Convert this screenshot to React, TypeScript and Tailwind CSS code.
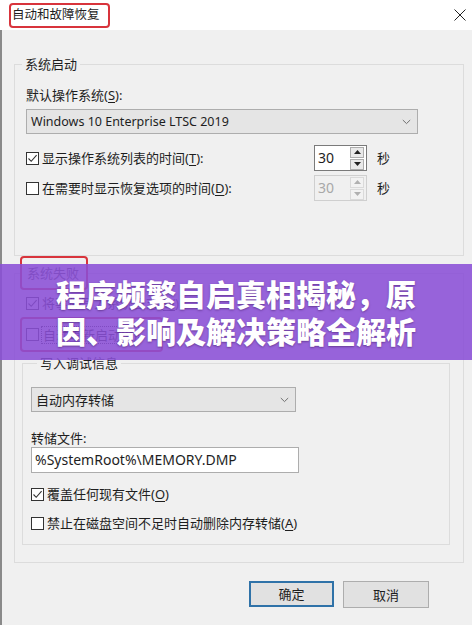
import type { ReactNode } from 'react'

const font = { fontFamily: '"Noto Sans", "Noto Sans CJK SC", sans-serif' }

function Check({ checked = false }: { checked?: boolean }) {
  return (
    <span className="flex h-[13px] w-[13px] shrink-0 items-center justify-center border border-[#333] bg-white">
      {checked && (
        <svg width="11" height="11" viewBox="0 0 11 11">
          <path d="M1.5 5.5 L4.2 8.3 L9.6 2.2" fill="none" stroke="#333" strokeWidth="1.1" />
        </svg>
      )}
    </span>
  )
}

function Chevron() {
  return (
    <svg width="9" height="6" viewBox="0 0 9 6">
      <path d="M0.8 1 L4.5 4.6 L8.2 1" fill="none" stroke="#707070" strokeWidth="1" />
    </svg>
  )
}

function Select({ value, w }: { value: string; w: string }) {
  return (
    <div className={`flex h-[25px] items-center justify-between border border-[#adadad] bg-[#e5e5e5] pl-[4px] pr-[6px] ${w}`}>
      <span>{value}</span>
      <Chevron />
    </div>
  )
}

function Spin({ disabled = false }: { disabled?: boolean }) {
  const arrow = disabled ? '#b0b0b0' : '#222'
  return (
    <div
      className={`flex h-[26px] w-[53px] items-center justify-between border pl-[3px] pr-[2px] ${
        disabled ? 'border-[#cfcfcf] bg-[#f0f0f0] text-[#a8a8a8]' : 'border-[#7a7a7a] bg-white'
      }`}
    >
      <span className="text-[14px]">30</span>
      <div className="flex flex-col gap-[1px]">
        {[0, 1].map((i) => (
          <span
            key={i}
            className={`flex h-[11px] w-[14px] items-center justify-center border ${
              disabled ? 'border-[#dadada] bg-[#f2f2f2]' : 'border-[#adadad] bg-[#e9e9e9]'
            }`}
          >
            <svg width="7" height="4" viewBox="0 0 7 4">
              <path d={i === 0 ? 'M0 4 L3.5 0 L7 4 Z' : 'M0 0 L3.5 4 L7 0 Z'} fill={arrow} />
            </svg>
          </span>
        ))}
      </div>
    </div>
  )
}

function CheckRow({ checked, children, className = '' }: { checked?: boolean; children: ReactNode; className?: string }) {
  return (
    <div className={`flex h-[18px] items-center gap-[3px] ${className}`}>
      <Check checked={checked} />
      <span>{children}</span>
    </div>
  )
}

function Key({ k }: { k: string }) {
  return (
    <>
      (<span className="underline underline-offset-2">{k}</span>)
    </>
  )
}

export default function App() {
  return (
    <div className="relative h-[625px] w-[472px] overflow-hidden bg-[#f0f0f0] text-[13px] leading-[18px] text-[#1e1e1e]" style={font}>
      <div className="flex h-[30px] items-center justify-between bg-white">
        <div className="ml-[9px] flex h-[25px] w-[101px] items-center rounded-[4px] border-2 border-[#d8343c] pl-[1px] text-[12.5px]">
          自动和故障恢复
        </div>
        <svg className="mr-[6px]" width="12" height="12" viewBox="0 0 12 12">
          <path d="M0.5 0.5 L11.5 11.5 M11.5 0.5 L0.5 11.5" stroke="#222" strokeWidth="1" />
        </svg>
      </div>

      <div className="h-[595px] border-l-2 border-[#8a8a8a] pt-[25px]">
        <fieldset className="ml-[12px] w-[450px] border border-[#dcdcdc] pb-[54px] pl-[11px]">
          <legend className="ml-[-4px] px-[3px]">系统启动</legend>
          <div className="mt-[13px]">
            默认操作系统<Key k="S" />:
          </div>
          <div className="mt-[5px]">
            <Select value="Windows 10 Enterprise LTSC 2019" w="w-[392px] text-[12.5px]" />
          </div>
          <div className="mt-[11px] flex items-center">
            <CheckRow checked className="w-[288px]">
              显示操作系统列表的时间<Key k="T" />:
            </CheckRow>
            <Spin />
            <span className="ml-[10px]">秒</span>
          </div>
          <div className="mt-[4px] flex items-center">
            <CheckRow className="w-[288px]">
              在需要时显示恢复选项的时间<Key k="D" />:
            </CheckRow>
            <Spin disabled />
            <span className="ml-[10px]">秒</span>
          </div>
        </fieldset>

        <fieldset className="ml-[12px] w-[450px] border border-[#dcdcdc] pb-[17px] pl-[5px] pr-[13px]">
          <legend className="flex h-[34px] w-[68px] items-center rounded-[4px] border-2 border-[#d8343c] pl-[5px] text-[#444]">
            系统失败
          </legend>
          <CheckRow checked className="ml-[6px] mt-[4px]">
            将事件写入系统日志<Key k="W" />
          </CheckRow>
          <div className="mt-[5px] flex h-[35px] w-[143px] items-center rounded-[4px] border-2 border-[#d8343c] pl-[4px]">
            <div className="flex items-center gap-[2px]">
              <Check />
              <span className="border border-dotted border-[#333] px-[1px] leading-[16px]">
                自动重新启动<Key k="R" />
              </span>
            </div>
          </div>
          <fieldset className="ml-[2px] mt-[2px] border border-[#dcdcdc] pb-[12px] pl-[8px]">
            <legend className="ml-[6px] px-[3px]">写入调试信息</legend>
            <div className="mt-[15px]">
              <Select value="自动内存转储" w="w-[265px]" />
            </div>
            <div className="mt-[17px]">转储文件:</div>
            <div className="flex h-[26px] w-[268px] items-center border border-[#adadad] bg-white pl-[3px] text-[14px]">
              %SystemRoot%\MEMORY.DMP
            </div>
            <CheckRow checked className="mt-[12px]">
              覆盖任何现有文件<Key k="O" />
            </CheckRow>
            <CheckRow className="mt-[11px]">
              禁止在磁盘空间不足时自动删除内存转储<Key k="A" />
            </CheckRow>
          </fieldset>
        </fieldset>

        <div className="mt-[18px] flex justify-end gap-[9px] pr-[43px]">
          <button className="h-[26px] w-[85px] border-2 border-[#2f72a8] bg-[#e1e1e1]">确定</button>
          <button className="h-[27px] w-[86px] border border-[#adadad] bg-[#e1e1e1]">取消</button>
        </div>
      </div>

      <div className="absolute left-0 top-[264px] flex h-[96px] w-full items-center justify-center bg-[#8a4fd6]/[0.88]">
        <div className="text-center text-[30px] font-black leading-[37px] text-white [text-shadow:0_1px_2px_rgba(60,20,90,0.5)]" style={{ fontFamily: '"Noto Sans CJK SC", sans-serif' }}>
          <div>程序频繁自启真相揭秘，原</div>
          <div>因、影响及解决策略全解析</div>
        </div>
      </div>
    </div>
  )
}
